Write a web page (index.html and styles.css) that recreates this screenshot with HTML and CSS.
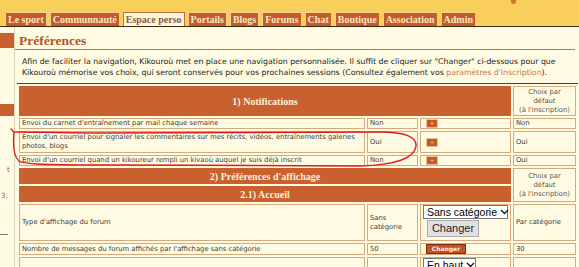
FILE: index.html
```html
<!DOCTYPE html>
<html lang="fr">
<head>
	<meta charset="utf-8">
	<title>Préférences</title>
	<link rel="stylesheet" href="styles.css">
</head>
<body>
<!-- bandeau du haut -->
	<div class="topbar">
		<div class="logo-row"><span class="logo-bit"></span></div>
		<ul class="tabs">
			<li>Le sport</li>
			<li>Communnauté</li>
			<li class="active">Espace perso</li>
			<li>Portails</li>
			<li>Blogs</li>
			<li>Forums</li>
			<li>Chat</li>
			<li>Boutique</li>
			<li>Association</li>
			<li>Admin</li>
		</ul>
	</div>
	<div class="page">
		<!-- colonne de gauche (coupée) -->
		<div class="sidebar">
			<div class="side-hl"></div>
			<div class="side-hl second"></div>
			<p class="side-frag f1">t</p>
			<p class="side-frag f2">3,</p>
			<div class="side-rule"></div>
		</div>
		<!-- contenu -->
		<div class="content">
			<h1 class="title">Préférences</h1>
			<p class="intro">Afin de faciliter la navigation, Kikouroù met en place une navigation personnalisée. Il suffit de cliquer sur "Changer" ci-dessous pour que Kikouroù mémorise vos choix, qui seront conservés pour vos prochaines sessions (Consultez également vos <a href="#">paramètres d'inscription</a>).</p>
			<table class="prefs">
				<colgroup>
					<col class="c1"><col class="c2"><col class="c3"><col class="c4">
				</colgroup>
				<tr>
					<td class="head" colspan="3">1) Notifications</td>
					<td class="dflt">Choix par<br>défaut<br>(à l'inscription)</td>
				</tr>
				<tr>
					<td>Envoi du carnet d'entraînement par mail chaque semaine</td>
					<td>Non</td>
					<td><span class="mini-btn">+</span></td>
					<td>Non</td>
				</tr>
				<tr>
					<td class="two">Envoi d'un courriel pour signaler les commentaires sur mes récits, vidéos, entraînements galeries photos, blogs</td>
					<td>Oui</td>
					<td><span class="mini-btn">+</span></td>
					<td>Oui</td>
				</tr>
				<tr>
					<td>Envoi d'un courriel quand un kikoureur rempli un kivaoù auquel je suis déjà inscrit</td>
					<td>Non</td>
					<td><span class="mini-btn">+</span></td>
					<td>Oui</td>
				</tr>
				<tr>
					<td class="head" colspan="3">2) Préférences d'affichage</td>
					<td class="dflt" rowspan="2">Choix par<br>défaut<br>(à l'inscription)</td>
				</tr>
				<tr>
					<td class="head" colspan="3">2.1) Accueil</td>
				</tr>
				<tr>
					<td>Type d'affichage du forum</td>
					<td>Sans catégorie</td>
					<td class="form-cell">
						<div class="fake-select wide"><span>Sans catégorie</span><svg width="9" height="6" viewBox="0 0 9 6"><path d="M1 1 L4.5 4.5 L8 1" fill="none" stroke="#111" stroke-width="1.3"/></svg></div>
						<button type="button" class="native-btn">Changer</button>
					</td>
					<td>Par catégorie</td>
				</tr>
				<tr>
					<td>Nombre de messages du forum affichés par l'affichage sans catégorie</td>
					<td>50</td>
					<td><button type="button" class="go-btn">Changer</button></td>
					<td>30</td>
				</tr>
				<tr>
					<td class="form-cell">&nbsp;</td>
					<td></td>
					<td class="form-cell">
						<div class="fake-select short"><span>En haut</span><svg width="9" height="6" viewBox="0 0 9 6"><path d="M1 1 L4.5 4.5 L8 1" fill="none" stroke="#111" stroke-width="1.3"/></svg></div>
					</td>
					<td></td>
				</tr>
			</table>
		</div>
	</div>
	<!-- annotation au stylo rouge -->
	<svg class="scribble" width="579" height="267" viewBox="0 0 579 267">
		<path d="M11 129 L14 132 C13 143, 13 156, 19 161 C24 165, 60 165, 120 165 L360 166 C395 165, 415 158, 416 146 C417 137, 405 132, 380 132 C300 132, 200 133, 100 133 C60 133, 30 132, 15 132" fill="none" stroke="#dc1f1f" stroke-width="1.4" stroke-linecap="round"/>
	</svg>
</body>
</html>
```

FILE: styles.css
```css
body{
	margin: 0;
	background: #fffbe2;
	font-family: "DejaVu Sans", Verdana, sans-serif;
	color: #333;
	position: relative;
	overflow: hidden;
	height: 267px;
}
/* bandeau + onglets */
.topbar{
	background: #f8cf5a;
	border-bottom: 1px solid #3b2a12;
}
.logo-row{
	height: 11px;
	display: flex;
	justify-content: flex-end;
	padding-right: 63px;
}
.logo-bit{
	width: 5px;
	height: 4px;
	background: #c9792f;
	border-radius: 0 0 3px 3px;
}
.tabs{
	list-style: none;
	margin: 0;
	padding: 0 0 0 5px;
	height: 15px;
	display: flex;
	align-items: flex-end;
	gap: 3px;
}
.tabs li{
	font: bold 10px/13px "Liberation Serif", serif;
	color: #fbe6c2;
	background: #c55b2b;
	border: 1px solid #f3d28e;
	border-bottom: 0;
	padding: 0 2px;
}
.tabs li.active{
	background: #fdf7dd;
	color: #8d5b3b;
	border-color: #c8703a;
}
/* mise en page */
.page{
	display: flex;
}
.sidebar{
	width: 14px;
	flex: none;
	border-right: 1px solid #ddd3b8;
	height: 240px;
	overflow: hidden;
}
.side-hl{
	height: 15px;
	margin-top: 6px;
	background: #c8612d;
}
.side-hl.second{
	height: 12px;
	margin-top: 56px;
}
.side-frag{
	margin: 0;
	font-size: 7px;
	line-height: 9px;
	color: #666;
}
.side-frag.f1{
	margin-top: 50px;
	padding-left: 7px;
}
.side-frag.f2{
	margin-top: 17px;
	padding-left: 1px;
}
.side-rule{
	width: 8px;
	margin-top: 33px;
	border-top: 1px solid #777;
}
.content{
	flex: 1;
	min-width: 0;
	padding: 5px 4px 0 0;
}
.title{
	margin: 0;
	padding-left: 4px;
	font: bold 13.5px/17px "Liberation Serif", serif;
	color: #b4531e;
	border-bottom: 1px solid #d27036;
}
.intro{
	margin: 6px 0 0;
	padding-left: 7px;
	font-size: 7.8px;
	line-height: 11px;
	color: #222;
}
.intro a{
	color: #c5774a;
	text-decoration: none;
}
/* tableau des préférences */
.prefs{
	margin: 5px 0 0 2px;
	width: 561px;
	table-layout: fixed;
	border-collapse: separate;
	border-spacing: 2px;
	border-top: 1px solid #4a4038;
	font-size: 6.8px;
	line-height: 9px;
	color: #3a3a3a;
}
.prefs col.c1{ width: 346px; }
.prefs col.c2{ width: 51px; }
.prefs col.c3{ width: 91px; }
.prefs col.c4{ width: 63px; }
.prefs td{
	box-sizing: border-box;
	border: 1px solid #d9a97c;
	padding: 0 2px;
	vertical-align: middle;
}
.prefs td.two{
	padding: 1px 2px;
}
.prefs td.head{
	background: #c8612d;
	border-color: #c8612d;
	color: #fdf0dc;
	text-align: center;
	font: bold 10px/13px "Liberation Serif", serif;
	padding: 1px 2px 0;
}
.prefs td.dflt{
	text-align: center;
	padding-top: 1px;
	color: #555;
}
.prefs td.form-cell{
	padding: 0 2px 3px;
}
.mini-btn{
	display: block;
	box-sizing: border-box;
	width: 12px;
	height: 9px;
	margin-left: 3px;
	background: #c6582a;
	border: 1px solid #edc49a;
	color: #f8d8a8;
	font-size: 5px;
	line-height: 7px;
	text-align: center;
}
.fake-select{
	box-sizing: border-box;
	height: 14px;
	display: flex;
	align-items: center;
	justify-content: space-between;
	gap: 3px;
	padding: 0 2px 0 3px;
	background: #fff;
	border: 1px solid #767676;
	font: 10.5px/12px "Liberation Sans", Arial, sans-serif;
	color: #000;
	white-space: nowrap;
}
.fake-select svg{
	flex: none;
}
.fake-select.wide{ width: 85px; }
.fake-select.short{ width: 53px; }
.native-btn{
	display: block;
	box-sizing: border-box;
	width: 52px;
	height: 17px;
	margin: 1px 0 0 4px;
	padding: 0;
	background: #e1e1e1;
	border: 1px solid #adadad;
	font: 11px/15px "Liberation Sans", Arial, sans-serif;
	color: #222;
}
.go-btn{
	display: block;
	box-sizing: border-box;
	width: 40px;
	height: 10px;
	margin-left: 3px;
	padding: 0;
	background: #c3502a;
	border: 1px solid #7e2c10;
	color: #fff3e2;
	font: bold 6px/8px "DejaVu Sans", Verdana, sans-serif;
}
/* annotation */
.scribble{
	position: absolute;
	left: 0;
	top: 0;
	pointer-events: none;
}
```
